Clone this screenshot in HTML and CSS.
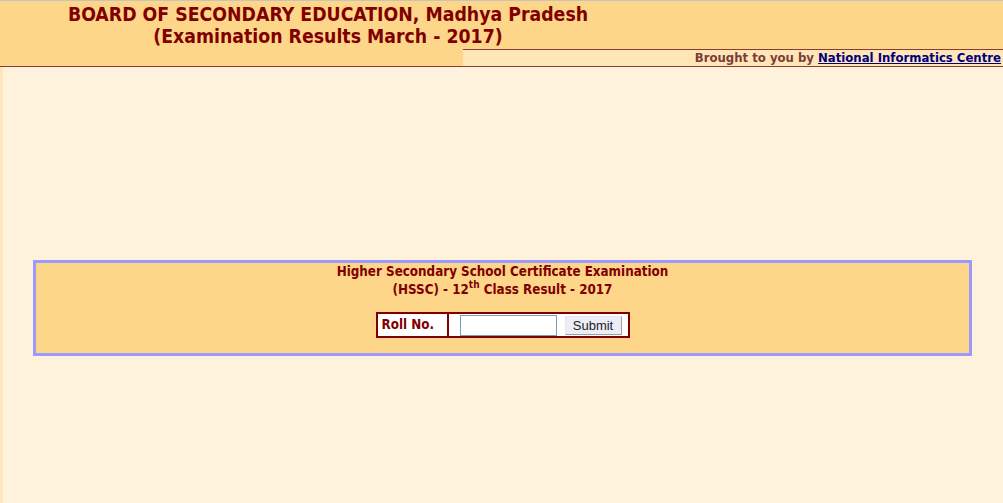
FILE: index.html
```html
<!DOCTYPE html>
<html>
<head>
<meta charset="utf-8">
<title>MP Board Results 2017</title>
<link rel="stylesheet" href="styles.css">
</head>
<body>
<div class="topline"></div>
<header class="head">
  <div class="title">BOARD OF SECONDARY EDUCATION, Madhya Pradesh<br>(Examination Results March - 2017)</div>
  <div class="credit-row">
    <div class="credit-gap"></div>
    <div class="credit">Brought to you by <a href="#" class="nic">National Informatics Centre</a></div>
  </div>
</header>
<div class="rule"></div>
<main class="page">
  <section class="box">
    <div class="exam">Higher Secondary School Certificate Examination</div>
    <div class="exam">(HSSC) - 12<sup>th</sup> Class Result - 2017</div>
    <form class="form" onsubmit="return false;">
      <div class="label">Roll No.</div>
      <div class="field">
        <input type="text" class="roll">
        <button type="submit" class="submit">Submit</button>
      </div>
    </form>
  </section>
</main>
</body>
</html>
```
FILE: styles.css
```css
html, body {
  margin: 0;
  padding: 0;
  height: 100%;
}
body {
  background: #FFF2DC;
  font-family: "DejaVu Sans Condensed", "DejaVu Sans", sans-serif;
  font-stretch: condensed;
  display: flex;
  flex-direction: column;
}
.topline {
  height: 1px;
  background: #C4C4C4;
}
.head {
  background: #FED689;
}
.title {
  width: 656px;
  height: 48px;
  text-align: center;
  color: #800000;
  font-weight: bold;
  font-size: 19.3px;
  line-height: 22px;
  padding-top: 3px;
  box-sizing: border-box;
}
.credit-row {
  display: flex;
  height: 17px;
}
.credit-gap {
  width: 463px;
}
.credit {
  flex: 1;
  background: #FFE6B6;
  border-top: 1px solid #8B3A3A;
  text-align: right;
  font-weight: bold;
  font-size: 13px;
  line-height: 16px;
  color: #7B3B3B;
  padding-right: 2px;
  white-space: nowrap;
}
.nic {
  color: #000080;
  text-decoration: underline;
}
.rule {
  height: 1px;
  background: #8B3A3A;
}
.page {
  flex: 1;
  border-left: 3px solid #FFE6B8;
  padding: 193px 31px 0 30px;
}
.box {
  background: #FED689;
  border: 3px solid #9999FF;
  padding: 0 0 15px;
  text-align: center;
  color: #800000;
  font-weight: bold;
  font-size: 13.3px;
}
.exam {
  line-height: 18px;
}
.exam sup {
  font-size: 10px;
  line-height: 0;
  vertical-align: 6px;
}
.form {
  display: inline-flex;
  margin-top: 13px;
  border: 2px solid #800000;
  background: #FFFFFF;
  height: 22px;
}
.label {
  width: 71px;
  border-right: 2px solid #800000;
  text-align: left;
  padding-left: 4px;
  box-sizing: border-box;
  line-height: 22px;
}
.field {
  width: 179px;
  box-sizing: border-box;
  display: flex;
  align-items: center;
  padding: 0 6px 0 11px;
  gap: 8px;
}
.roll {
  flex: none;
  width: 97px;
  height: 21px;
  box-sizing: border-box;
  border: 1px solid #7F9DB9;
  margin: 0;
  padding: 1px 2px;
  font-size: 13px;
}
.submit {
  flex: none;
  width: 57px;
  height: 19px;
  box-sizing: border-box;
  margin: 0;
  padding: 0;
  background: #EDEDF7;
  border: 1px solid #A0A0A0;
  border-top-color: #E8E8E8;
  border-left-color: #E8E8E8;
  font-family: "Liberation Sans", Arial, sans-serif;
  font-size: 13px;
  color: #222;
  font-weight: normal;
}
```
